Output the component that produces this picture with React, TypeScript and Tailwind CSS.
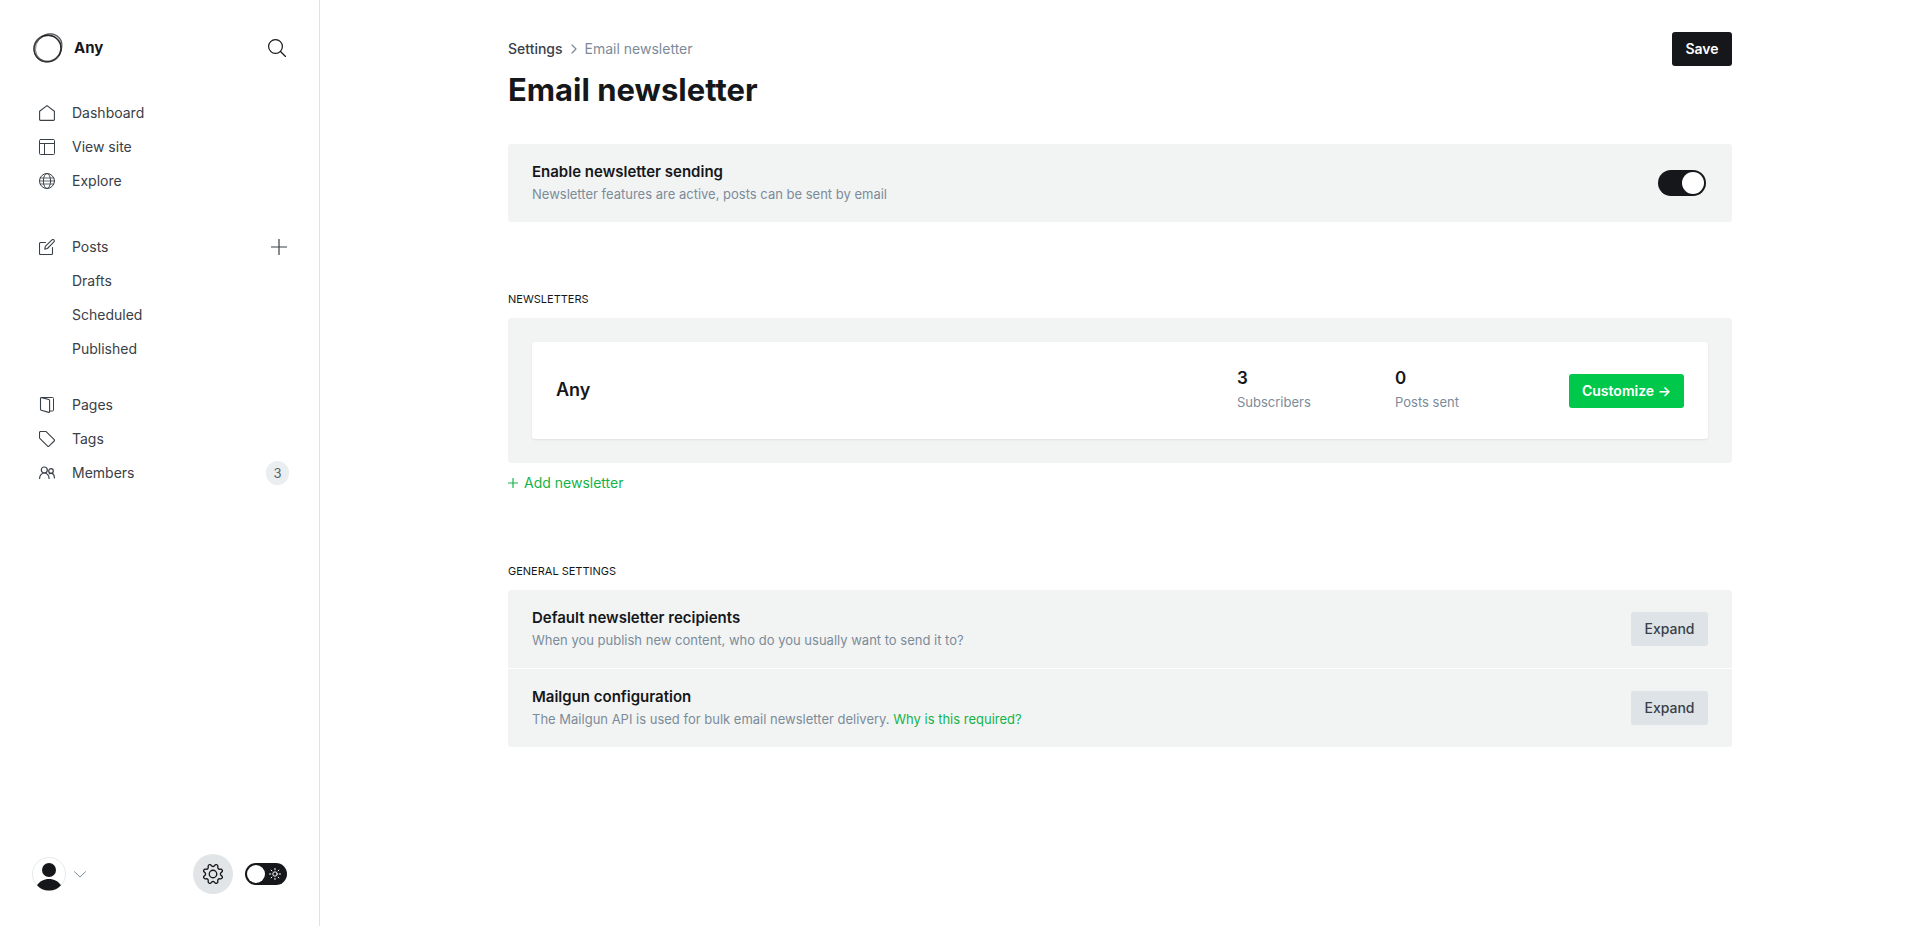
import { useState } from "react";
import type { ReactNode } from "react";

function Icon({ children, size = "size-4", view = "0 0 16 16" }: { children: ReactNode; size?: string; view?: string }) {
  return (
    <svg
      className={`${size} shrink-0`}
      viewBox={view}
      fill="none"
      stroke="currentColor"
      strokeLinecap="round"
      strokeLinejoin="round"
      aria-hidden="true"
    >
      {children}
    </svg>
  );
}

const HomeIcon = () => (
  <Icon>
    <path d="M.6 6.2 8 .6l7.4 5.600v8.300c0 .5-.4.900-.9.900h-13a.9.900 0 0 1-.9-.9z" strokeWidth="1.100" />
  </Icon>
);
const SiteIcon = () => (
  <Icon>
    <rect x=".5" y=".5" width="15" height="15" rx="1" />
    <path d="M.5 4.500h15M5.500 4.500v11" />
  </Icon>
);
const GlobeIcon = () => (
  <Icon>
    <circle cx="8" cy="8" r="7.500" />
    <ellipse cx="8" cy="8" rx="3.600" ry="7.500" />
    <path d="M1.200 5h13.600M.500 8h15M1.200 11h13.600" strokeWidth=".8" />
  </Icon>
);
const PostsIcon = () => (
  <Icon>
    <path d="M13.500 8.500v6a1 1 0 0 1-1 1h-11a1 1 0 0 1-1-1v-10a1 1 0 0 1 1-1h5" strokeWidth="1.100" />
    <path d="m5.800 10.200.5-2.800L13 .9c.5-.5 1.300-.5 1.900 0 .6.600.6 1.400 0 1.900L8.400 9.500z" strokeWidth="1.100" />
  </Icon>
);
const PagesIcon = () => (
  <Icon>
    <path d="m9.800 15.400-7.500-2.100a1 1 0 0 1-.8-1V1.500c0-.7.500-1.100 1.100-.9l7.200 1.900c.5.100.8.500.8 1v11.300c0 .4-.3.700-.8.600z" strokeWidth="1.100" />
    <path d="M2.500.500h11a1 1 0 0 1 1 1v11.500a1 1 0 0 1-1 1h-2.900" />
  </Icon>
);
const TagIcon = () => (
  <Icon>
    <path
      d="M1.500.500h5.200c.3 0 .500.100.700.300l7.800 7.800c.4.400.4 1 0 1.400l-5.200 5.200c-.4.400-1 .400-1.400 0L.800 7.400a1 1 0 0 1-.3-.7V1.500a1 1 0 0 1 1-1z"
      strokeWidth="1.100"
    />
  </Icon>
);
const MembersIcon = () => (
  <Icon>
    <g strokeWidth="1.200">
      <circle cx="5.300" cy="5" r="3" />
      <path d="M.600 13.400c0-3 2-5.400 4.700-5.400s4.800 2.400 4.800 5.400" />
      <circle cx="12" cy="6" r="2.300" />
      <path d="M10.300 8.800c.5-.3 1.100-.5 1.700-.5 2 0 3.400 2 3.400 4.700" />
    </g>
  </Icon>
);

function BrandMark() {
  return (
    <svg className="size-8 shrink-0" viewBox="0 0 32 32" fill="none" stroke="#15171a" aria-hidden="true">
      <path
        d="M18 1.200c6.500-.2 11.500 4 12.400 10.300.9 7-4.400 18.300-14 19C8 31 1.200 25 1.400 16.500 1.600 8 9 1.500 18 1.200zM17 3.600C9 3.600 3.400 9.500 3.400 16.800c0 6.800 5.600 12 12.300 11.900 7.500 0 13.500-6.700 13.500-13.500C29.200 8.600 24 3.600 17 3.600z"
        fill="#15171a"
        fillRule="evenodd"
        stroke="none"
        opacity=".3"
      />
      <ellipse cx="15.500" cy="16.600" rx="13.600" ry="13.300" strokeWidth="1.300" opacity=".75" />
      <ellipse cx="16.800" cy="15.500" rx="12.600" ry="14.300" strokeWidth=".8" opacity=".5" transform="rotate(38 16.800 15.500)" />
      <ellipse cx="15.400" cy="16.800" rx="14" ry="12.600" strokeWidth=".9" opacity=".6" transform="rotate(-42 15.400 16.800)" />
      <path d="M9 4.800c6-3.300 14-1.800 18.500 4.600 2.400 4.600 2.400 10.300-1 15" strokeWidth="1" opacity=".7" />
      <path d="M12 3c5-2.200 12-1.600 15.800 3.200 1.500 2 2 3.800 2.200 5.800" strokeWidth=".8" opacity=".55" />
    </svg>
  );
}

function NavItem({ icon, label, children }: { icon?: ReactNode; label: string; children?: ReactNode }) {
  return (
    <li className="flex h-[34px] items-center justify-between pr-8">
      <a href="#" className="flex flex-1 items-center gap-[17px] pl-[39px]">
        <span className="flex size-4">{icon}</span>
        {label}
      </a>
      {children}
    </li>
  );
}

function SettingRow({ title, text, children }: { title: string; text: ReactNode; children: ReactNode }) {
  return (
    <div className="flex h-[78px] items-center justify-between bg-[#f2f4f3] px-6">
      <div>
        <h3 className="text-[15px] leading-[22px] font-semibold">{title}</h3>
        <p className="text-[13px] leading-[22px] text-[#7c8b9a]">{text}</p>
      </div>
      {children}
    </div>
  );
}

function Stat({ label, value }: { label: string; value: number }) {
  return (
    <div className="flex w-[158px] flex-col-reverse">
      <dt className="text-[13px] leading-6 text-[#7c8b9a]">{label}</dt>
      <dd className="text-[17px] leading-6 font-semibold">{value}</dd>
    </div>
  );
}

function ExpandButton({ label }: { label: string }) {
  return (
    <button
      type="button"
      aria-label={`Expand ${label}`}
      className="h-[34px] w-[77px] rounded-[3px] bg-[#dde3e6] text-sm font-medium text-[#394047]"
    >
      Expand
    </button>
  );
}

export default function App() {
  const [enabled, setEnabled] = useState(true);
  const [night, setNight] = useState(false);

  return (
    <div className="flex min-h-screen bg-white font-['Inter',sans-serif] text-sm text-[#15171a]">
      <aside className="flex w-80 shrink-0 flex-col border-r border-[#dfe1e3]">
        <div className="flex h-24 items-center justify-between pr-[33px] pl-8">
          <div className="flex items-center gap-2.5">
            <BrandMark />
            <span className="text-[15px] font-bold">Any</span>
          </div>
          <button type="button" aria-label="Search">
            <Icon size="size-[18px]" view="0 0 18 18">
              <circle cx="7.500" cy="7.500" r="6.900" strokeWidth="1.200" />
              <path d="m12.500 12.500 5 5" strokeWidth="1.300" />
            </Icon>
          </button>
        </div>

        <nav className="flex-1 text-[#394047]">
          <ul>
            <NavItem icon={<HomeIcon />} label="Dashboard" />
            <NavItem icon={<SiteIcon />} label="View site" />
            <NavItem icon={<GlobeIcon />} label="Explore" />
          </ul>
          <ul className="pt-8">
            <NavItem icon={<PostsIcon />} label="Posts">
              <button type="button" aria-label="New post">
                <Icon>
                  <path d="M8 0v16M0 8h16" strokeLinecap="butt" strokeWidth="1.200" />
                </Icon>
              </button>
            </NavItem>
            <NavItem label="Drafts" />
            <NavItem label="Scheduled" />
            <NavItem label="Published" />
          </ul>
          <ul className="pt-[22px]">
            <NavItem icon={<PagesIcon />} label="Pages" />
            <NavItem icon={<TagIcon />} label="Tags" />
            <NavItem icon={<MembersIcon />} label="Members">
              <span className="-mr-0.5 flex h-6 w-[23px] items-center justify-center rounded-full bg-[#ebeef0] text-[13px] text-[#54666d]">
                3
              </span>
            </NavItem>
          </ul>
        </nav>

        <div className="flex items-center justify-between pr-8 pb-8 pl-8">
          <button type="button" aria-label="Account menu" className="flex items-center gap-2 text-[#7c8b9a]">
            <svg className="size-[34px]" viewBox="0 0 34 34" aria-hidden="true">
              <circle cx="17" cy="17" r="16.500" fill="#fff" stroke="#e5e9ea" />
              <circle cx="17" cy="13" r="7" fill="#15171a" />
              <path d="M5 28.300c2.500-4 6.900-6.300 12-6.300s9.500 2.300 12 6.300A16 16 0 0 1 17 33.500a16 16 0 0 1-12-5.200z" fill="#15171a" />
            </svg>
            <Icon size="h-[7px] w-3" view="0 0 12 7">
              <path d="m.5.700 5.500 5.300L11.500.700" />
            </Icon>
          </button>
          <div className="flex items-center gap-3">
            <a
              href="#"
              aria-label="Settings menu"
              className="flex size-10 items-center justify-center rounded-full bg-[#e1e5e8]"
            >
              <Icon size="size-5" view="0 0 24 24">
                <g strokeWidth="1.600">
                  <path d="M10.546 2.438a1.957 1.957 0 0 0 2.908 0L14.400 1.400a1.959 1.959 0 0 1 3.410 1.413l-.071 1.400a1.958 1.958 0 0 0 2.051 2.051l1.400-.071A1.959 1.959 0 0 1 22.600 9.600l-1.040.940a1.960 1.960 0 0 0 0 2.909l1.040.940a1.959 1.959 0 0 1-1.413 3.410l-1.400-.071a1.958 1.958 0 0 0-2.056 2.056l.071 1.400A1.959 1.959 0 0 1 14.400 22.600l-.941-1.041a1.959 1.959 0 0 0-2.908 0L9.606 22.600A1.959 1.959 0 0 1 6.200 21.192l.072-1.400a1.958 1.958 0 0 0-2.056-2.056l-1.400.071A1.958 1.958 0 0 1 1.400 14.400l1.041-.940a1.960 1.960 0 0 0 0-2.909L1.400 9.606A1.958 1.958 0 0 1 2.809 6.200l1.400.071a1.958 1.958 0 0 0 2.058-2.060L6.200 2.810A1.959 1.959 0 0 1 9.606 1.400z" />
                  <circle cx="12" cy="12" r="4.500" />
                </g>
              </Icon>
            </a>
            <label className="relative flex h-[22px] w-[42px] items-center justify-between rounded-full bg-[#15171a] pr-1.5 pl-0.5 text-white">
              <input
                type="checkbox"
                aria-label="Night shift"
                checked={night}
                onChange={() => setNight(!night)}
                className="absolute inset-0 size-full opacity-0"
              />
              <span className="size-[18px] rounded-full bg-white" />
              <Icon size="size-3" view="0 0 12 12">
                <circle cx="6" cy="6" r="2.200" />
                <path d="M6 .500v1.300M6 10.200v1.300M.500 6h1.300M10.200 6h1.300M2.100 2.100l.8.800M9.100 9.100l.8.800M2.100 9.900l.8-.8M9.100 2.900l.8-.8" />
              </Icon>
            </label>
          </div>
        </div>
      </aside>

      <main className="min-w-0 flex-1 px-12">
        <div className="mx-auto max-w-[1224px] pt-8">
          <header className="flex items-start justify-between">
            <div>
              <nav aria-label="Breadcrumb" className="flex h-[34px] items-center gap-2">
                <a href="#" className="font-medium text-[#394047]">
                  Settings
                </a>
                <span className="text-[#7c8b9a]">
                  <Icon size="h-2.5 w-1.5" view="0 0 6 10">
                    <path d="m1 1 4 4-4 4" strokeWidth="1.200" />
                  </Icon>
                </span>
                <span className="text-[#7c8b9a]">Email newsletter</span>
              </nav>
              <h1 className="text-[31px] leading-12 font-bold">Email newsletter</h1>
            </div>
            <button type="button" className="h-[34px] w-[60px] rounded-[3px] bg-[#15171a] font-semibold text-white">
              Save
            </button>
          </header>

          <section className="mt-[30px] overflow-hidden rounded-[3px]">
            <SettingRow title="Enable newsletter sending" text="Newsletter features are active, posts can be sent by email">
              <label className="relative mr-0.5 block h-[26px] w-12">
                <input
                  type="checkbox"
                  aria-label="Enable newsletter sending"
                  checked={enabled}
                  onChange={() => setEnabled(!enabled)}
                  className="peer absolute inset-0 size-full opacity-0"
                />
                <span className="flex h-full items-center rounded-full bg-[#ced4d9] px-0.5 peer-checked:justify-end peer-checked:bg-[#15171a]">
                  <span className="size-[22px] rounded-full bg-white" />
                </span>
              </label>
            </SettingRow>
          </section>

          <section className="mt-[68px]">
            <h2 className="pb-2.5 text-[11px] leading-[18px] uppercase">Newsletters</h2>
            <div className="rounded-[3px] bg-[#f2f4f3] p-6">
              <div className="flex h-[97px] items-center rounded-[3px] bg-white px-6 shadow-[0_1px_2px_rgba(0,0,0,0.08)]">
                <h3 className="flex-1 pb-0.5 text-lg font-semibold">Any</h3>
                <dl className="flex pr-4 pb-0.5">
                  <Stat label="Subscribers" value={3} />
                  <Stat label="Posts sent" value={0} />
                </dl>
                <button
                  type="button"
                  className="flex h-[34px] w-[115px] items-center justify-center rounded-[3px] bg-[#00c84b] font-semibold text-white"
                >
                  Customize →
                </button>
              </div>
            </div>
            <button type="button" className="flex h-10 items-center gap-1.5 text-sm text-[#14b34a]">
              <Icon size="size-2.5" view="0 0 10 10">
                <path d="M5 .500v9M.500 5h9" strokeWidth="1.200" />
              </Icon>
              Add newsletter
            </button>
          </section>

          <section className="mt-[59px]">
            <h2 className="pb-2.5 text-[11px] leading-[18px] uppercase">General settings</h2>
            <div className="flex flex-col gap-px overflow-hidden rounded-[3px]">
              <SettingRow title="Default newsletter recipients" text="When you publish new content, who do you usually want to send it to?">
                <ExpandButton label="default newsletter recipients" />
              </SettingRow>
              <SettingRow
                title="Mailgun configuration"
                text={
                  <>
                    The Mailgun API is used for bulk email newsletter delivery.{" "}
                    <a href="#" className="text-[#14b34a]">
                      Why is this required?
                    </a>
                  </>
                }
              >
                <ExpandButton label="Mailgun configuration" />
              </SettingRow>
            </div>
          </section>
        </div>
      </main>
    </div>
  );
}
